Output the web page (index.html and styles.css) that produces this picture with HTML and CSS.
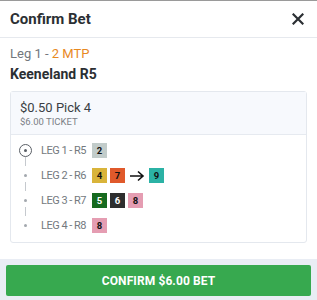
FILE: index.html
```html
<!DOCTYPE html>
<html>
<head>
<meta charset="utf-8">
<link rel="stylesheet" href="styles.css">
</head>
<body>
<div class="modal">
  <div class="header">
    <span class="title">Confirm Bet</span>
    <svg class="close" width="12" height="12" viewBox="0 0 12 12"><path d="M1.5 1.5 L10.5 10.5 M10.5 1.5 L1.5 10.5" stroke="#2b2f33" stroke-width="2.2" stroke-linecap="square"/></svg>
  </div>
  <div class="body">
    <div class="leg-info">Leg 1 - <span class="mtp">2 MTP</span></div>
    <div class="track">Keeneland R5</div>
    <div class="card">
      <div class="card-head">
        <div class="bet-name">$0.50 Pick 4</div>
        <div class="ticket">$6.00 TICKET</div>
      </div>
      <div class="legs">
        <div class="leg">
          <div class="marker"><span class="ring"><span class="dot"></span></span></div>
          <span class="leg-label">LEG 1 - R5</span>
          <span class="sc c2">2</span>
        </div>
        <div class="leg">
          <div class="marker"><span class="line"></span><span class="small-dot"></span></div>
          <span class="leg-label">LEG 2 - R6</span>
          <span class="sc c4">4</span><span class="sc c7">7</span>
          <svg class="arrow" width="16" height="12" viewBox="0 0 16 12"><path d="M1 6 H14 M9 1.5 L14 6 L9 10.5" fill="none" stroke="#111" stroke-width="1.6"/></svg>
          <span class="sc c9">9</span>
        </div>
        <div class="leg">
          <div class="marker"><span class="line"></span><span class="small-dot"></span></div>
          <span class="leg-label">LEG 3 - R7</span>
          <span class="sc c5">5</span><span class="sc c6">6</span><span class="sc c8">8</span>
        </div>
        <div class="leg">
          <div class="marker"><span class="line"></span><span class="small-dot"></span></div>
          <span class="leg-label">LEG 4 - R8</span>
          <span class="sc c8">8</span>
        </div>
      </div>
    </div>
  </div>
  <div class="footer">
    <button class="confirm">CONFIRM $6.00 BET</button>
  </div>
</div>
</body>
</html>
```
FILE: styles.css
```css
* { box-sizing: border-box; }
html, body { margin: 0; padding: 0; }
body {
  width: 317px;
  height: 300px;
  font-family: Roboto, "Liberation Sans", sans-serif;
  background: #fff;
  overflow: hidden;
}
.modal {
  border-top: 1px solid #9a9a9a;
  height: 300px;
  display: flex;
  flex-direction: column;
}
.header {
  height: 37px;
  display: flex;
  align-items: center;
  justify-content: space-between;
  padding: 0 13px 0 10px;
  border-bottom: 1px solid #e6e9ee;
}
.title {
  font-size: 15px;
  font-weight: 700;
  color: #2b2f33;
}
.close { display: block; }
.body {
  padding: 7px 10px 0 10px;
  flex: 1;
}
.leg-info {
  font-size: 13px;
  color: #72777c;
  line-height: 17px;
}
.mtp { color: #e8891f; }
.track {
  font-size: 14px;
  font-weight: 700;
  color: #2b2f33;
  line-height: 18px;
  margin-top: 3px;
}
.card {
  margin-top: 8px;
  border: 1px solid #e4e8ee;
  border-radius: 3px;
  height: 152px;
}
.card-head {
  background: #f7f9fd;
  border-bottom: 1px solid #e6eaf0;
  padding: 8px 9px 0 9px;
  height: 43px;
}
.bet-name {
  font-size: 13px;
  color: #3a3f44;
  line-height: 16px;
}
.ticket {
  font-size: 9.5px;
  color: #7b8085;
  line-height: 12px;
}
.legs {
  padding: 3px 0 0 8px;
}
.leg {
  display: flex;
  align-items: center;
  height: 25px;
}
.marker {
  width: 13px;
  height: 25px;
  position: relative;
  margin-right: 9px;
  display: flex;
  align-items: center;
  justify-content: center;
}
.ring {
  width: 13px;
  height: 13px;
  border: 1.5px solid #5a5f66;
  border-radius: 50%;
  display: flex;
  align-items: center;
  justify-content: center;
}
.dot {
  width: 3px;
  height: 3px;
  background: #5a5f66;
  border-radius: 50%;
}
.small-dot {
  width: 3px;
  height: 3px;
  background: #a3a8ae;
  border-radius: 50%;
}
.line {
  position: absolute;
  left: 6px;
  top: -6px;
  width: 1px;
  height: 9px;
  background: #c5c9ce;
}
.leg-label {
  font-size: 11px;
  letter-spacing: -0.5px;
  color: #74797e;
  width: 51px;
  white-space: nowrap;
}
.sc {
  width: 15px;
  height: 15px;
  display: inline-flex;
  align-items: center;
  justify-content: center;
  font-size: 9.5px;
  font-weight: 700;
  margin-right: 3px;
  color: #111;
}
.c2 { background: #c2ccca; }
.c4 { background: #d9b43a; }
.c7 { background: #e0592b; }
.c9 { background: #2bb2a5; }
.c5 { background: #166a1f; color: #fff; }
.c6 { background: #2e2e2e; color: #fff; }
.c8 { background: #e59db2; }
.arrow { margin: 0 4px 0 1px; }
.footer {
  margin-top: 15px;
  background: #e9edf4;
  height: 41px;
  padding: 6px 6px 4px 6px;
}
.confirm {
  display: block;
  width: 100%;
  height: 31px;
  border: none;
  border-radius: 2px;
  background: #37a94f;
  color: #fff;
  font-family: Roboto, "Liberation Sans", sans-serif;
  font-weight: 700;
  font-size: 12px;
  letter-spacing: 0.1px;
}
```
